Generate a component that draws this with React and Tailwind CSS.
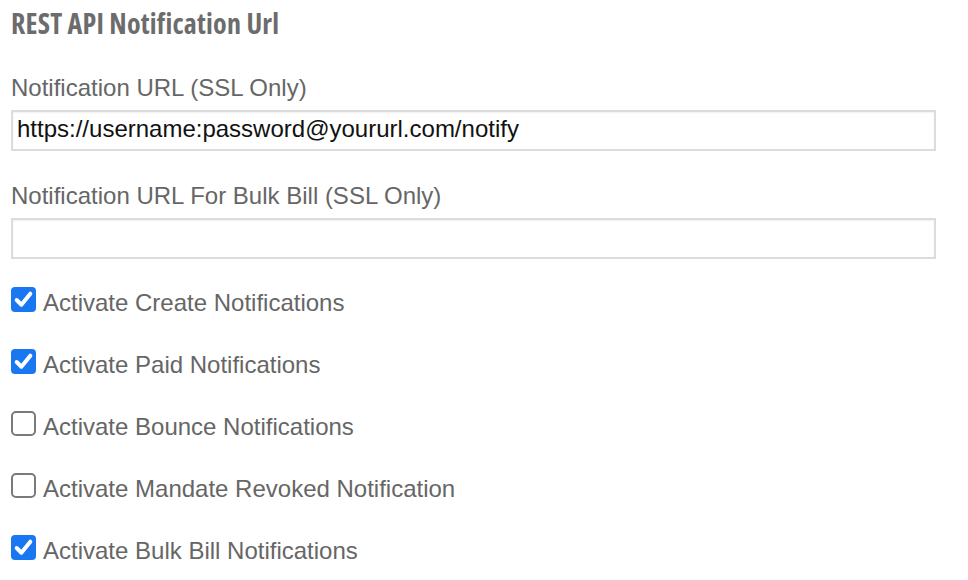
const options = [
  { label: 'Activate Create Notifications', checked: true },
  { label: 'Activate Paid Notifications', checked: true },
  { label: 'Activate Bounce Notifications', checked: false },
  { label: 'Activate Mandate Revoked Notification', checked: false },
  { label: 'Activate Bulk Bill Notifications', checked: true },
];

function CheckRow({ label, checked }) {
  return (
    <div className="flex items-start gap-[7px]">
      {checked ? (
        <span className="flex h-[25px] w-[25px] shrink-0 items-center justify-center rounded-[4px] bg-[#1a77f2]">
          <svg width="21" height="21" viewBox="0 0 20 20" fill="none">
            <path d="M3.5 10.5 L8 15 L16.5 4.5" stroke="white" strokeWidth="3.8" strokeLinecap="round" strokeLinejoin="round" />
          </svg>
        </span>
      ) : (
        <span className="h-[25px] w-[25px] shrink-0 rounded-[5px] border-2 border-[#7a7a7a] bg-white" />
      )}
      <span className="mt-[2px] text-[24px] leading-[28px] text-[#666]">{label}</span>
    </div>
  );
}

export default function App() {
  return (
    <div className="min-h-screen bg-white px-[11px] font-['Liberation_Sans',Arial,sans-serif]">
      <h3 className="pt-[5px] font-['Open_Sans',sans-serif] text-[28px] font-bold leading-[36px] tracking-[0.2px] text-[#6c6c6c] [font-stretch:condensed]">
        REST API Notification Url
      </h3>

      <label className="mt-[33px] block text-[24px] leading-[28px] text-[#666]">Notification URL (SSL Only)</label>
      <input
        type="text"
        defaultValue="https://username:password@yoururl.com/notify"
        className="mt-[8px] block h-[41px] w-[925px] border-2 border-[#dcdcdc] bg-white pl-[4px] pt-[3px] pb-[7px] text-[24px] leading-[28px] text-[#111] shadow-[inset_0_1px_2px_rgba(0,0,0,0.06)] outline-none"
      />

      <label className="mt-[31px] block text-[24px] leading-[28px] text-[#666]">Notification URL For Bulk Bill (SSL Only)</label>
      <input
        type="text"
        className="mt-[8px] block h-[41px] w-[925px] border-2 border-[#dcdcdc] bg-white pl-[4px] text-[24px] shadow-[inset_0_1px_2px_rgba(0,0,0,0.06)] outline-none"
      />

      <div className="mt-[28px] flex flex-col gap-[32px]">
        {options.map((o) => (
          <CheckRow key={o.label} label={o.label} checked={o.checked} />
        ))}
      </div>
    </div>
  );
}
